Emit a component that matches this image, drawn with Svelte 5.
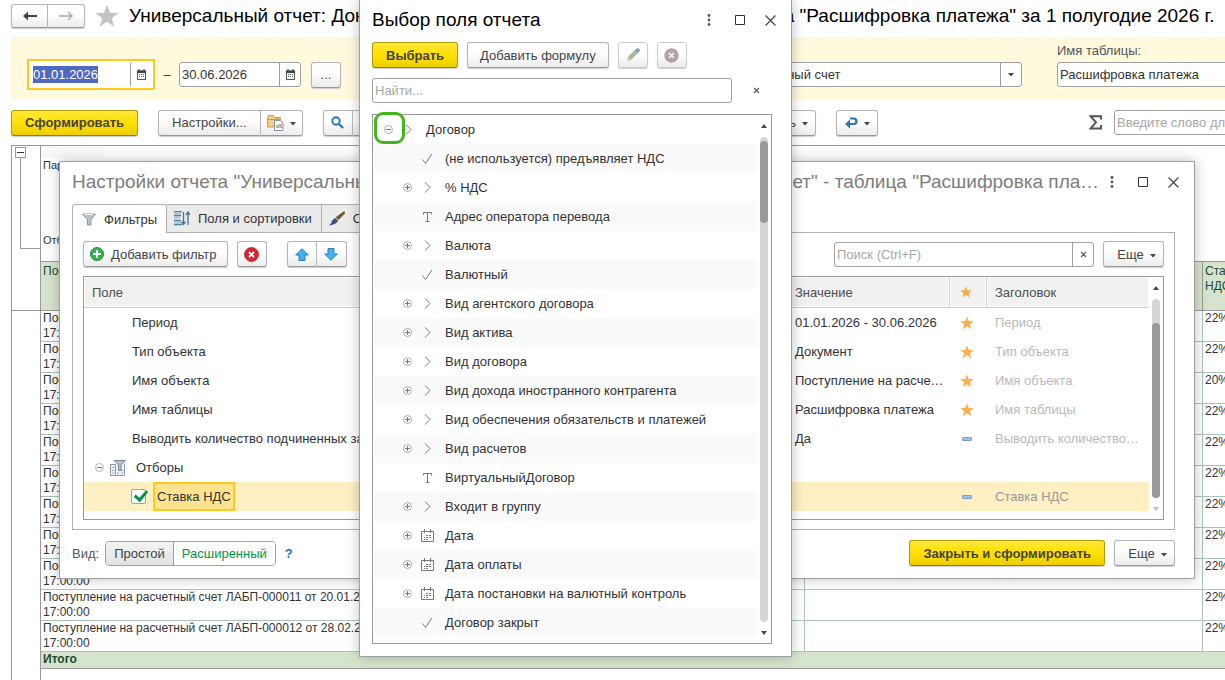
<script lang="ts">
  type Kind = 'ref' | 'bool' | 'text' | 'date';

  interface Field {
    name: string;
    kind: Kind;
  }

  interface Setting {
    name: string;
    value: string;
    starred: boolean;
  }

  const fields: Field[] = [
    { name: '(не используется) предъявляет НДС', kind: 'bool' },
    { name: '% НДС', kind: 'ref' },
    { name: 'Адрес оператора перевода', kind: 'text' },
    { name: 'Валюта', kind: 'ref' },
    { name: 'Валютный', kind: 'bool' },
    { name: 'Вид агентского договора', kind: 'ref' },
    { name: 'Вид актива', kind: 'ref' },
    { name: 'Вид договора', kind: 'ref' },
    { name: 'Вид дохода иностранного контрагента', kind: 'ref' },
    { name: 'Вид обеспечения обязательств и платежей', kind: 'ref' },
    { name: 'Вид расчетов', kind: 'ref' },
    { name: 'ВиртуальныйДоговор', kind: 'text' },
    { name: 'Входит в группу', kind: 'ref' },
    { name: 'Дата', kind: 'date' },
    { name: 'Дата оплаты', kind: 'date' },
    { name: 'Дата постановки на валютный контроль', kind: 'date' },
    { name: 'Договор закрыт', kind: 'bool' }
  ];

  const settings: Setting[] = [
    { name: 'Период', value: '01.01.2026 - 30.06.2026', starred: true },
    { name: 'Тип объекта', value: 'Документ', starred: true },
    { name: 'Имя объекта', value: 'Поступление на расчетный счет', starred: true },
    { name: 'Имя таблицы', value: 'Расшифровка платежа', starred: true },
    { name: 'Выводить количество подчиненных записей', value: 'Да', starred: false }
  ];

  const dates = ['12.01', '13.01', '14.01', '14.01', '15.01', '15.01', '16.01', '16.01', '19.01', '20.01', '28.02'];
  const rows = dates.map((d, i) => ({
    doc: `Поступление на расчетный счет ЛАБП-${String(i + 2).padStart(6, '0')} от ${d}.2026`,
    rate: i === 2 ? '20%' : '22%'
  }));

  let dateFrom = '01.01.2026';
  let dateTo = '30.06.2026';
  let expanded = true;
  let rateEnabled = true;
  let view = 'full';
</script>

<svelte:head>
  <title>Универсальный отчет</title>
</svelte:head>

{#snippet calendar()}
  <svg width="11" height="11" viewBox="0 0 11 11" aria-hidden="true">
    <path d="M1.5 2h8v8.500h-8z" fill="#fff" stroke="#555" />
    <path d="M1 1.500h9V4H1z" fill="#444" />
    <path d="M3 0v2M8 0v2" stroke="#444" />
    <path d="M3 5.500h1M5 5.500h1M7 5.500h1M3 7.500h1M5 7.500h1M7 7.500h1" stroke="#555" />
  </svg>
{/snippet}

{#snippet caret()}
  <svg class="caret" width="6" height="4" viewBox="0 0 6 4" aria-hidden="true"><path d="M0 0h6L3 3.500z" fill="#444" /></svg>
{/snippet}

{#snippet star(size: number, color: string)}
  <svg width={size} height={size} viewBox="0 0 24 24" aria-hidden="true">
    <path d="M12 .5l3 8.200 8.700.2-6.900 5.400 2.500 8.500L12 17.700l-7.300 5.100 2.500-8.500L.3 8.900 9 8.700z" fill={color} />
  </svg>
{/snippet}

{#snippet cross(size: number)}
  <svg width={size} height={size} viewBox="0 0 10 10" aria-hidden="true"><path d="M.5.5l9 9M9.500.5l-9 9" stroke="#444" stroke-width="1.100" fill="none" /></svg>
{/snippet}

{#snippet clearMark()}
  <svg width="7" height="7" viewBox="0 0 7 7" aria-hidden="true"><path d="M1 1l5 5M6 1L1 6" stroke="#555" stroke-width="1.100" /></svg>
{/snippet}

{#snippet winControls()}
  <div class="controls">
    <button type="button" aria-label="Меню">
      <svg width="4" height="12" viewBox="0 0 4 12"><circle cx="2" cy="1.500" r="1.400" fill="#555" /><circle cx="2" cy="6" r="1.400" fill="#555" /><circle cx="2" cy="10.500" r="1.400" fill="#555" /></svg>
    </button>
    <button type="button" aria-label="Развернуть">
      <svg width="11" height="10" viewBox="0 0 11 10"><path d="M1.500.5h9v9h-9z" fill="none" stroke="#333" /></svg>
    </button>
    <button type="button" aria-label="Закрыть">{@render cross(11)}</button>
  </div>
{/snippet}

{#snippet expander(open: boolean)}
  <svg width="9" height="9" viewBox="0 0 9 9" aria-hidden="true">
    <circle cx="4.500" cy="4.500" r="4" fill="#fff" stroke="#999" stroke-width=".8" />
    <path d={open ? 'M2 4.500h5' : 'M2 4.500h5M4.500 2v5'} stroke="#777" />
  </svg>
{/snippet}

{#snippet kindIcon(kind: Kind)}
  <svg width="13" height="13" viewBox="0 0 13 13" fill="none" stroke="#777" aria-hidden="true">
    {#if kind === 'ref'}
      <path d="M4 1.500l5 5-5 5" />
    {:else if kind === 'bool'}
      <path d="M1.500 7.500l3 4L11 2" />
    {:else if kind === 'text'}
      <path d="M2.500 4.500v-2h8v2M6.500 2.500v9M4.500 11.500h4" />
    {:else}
      <path d="M.5 2.500h12v10H.5zM3.500 0v4M9.500 0v4" />
      <path d="M5 6.500h2M8 6.500h2M3 8.500h1M5 8.500h2M8 8.500h2M3 10.500h1M5 10.500h2" stroke-width="1.200" />
    {/if}
  </svg>
{/snippet}

<div class="page">
  <header class="top">
    <div class="group">
      <button type="button" class="btn nav" aria-label="Назад">
        <svg width="14" height="10" viewBox="0 0 14 10"><path d="M14 4v2H5v3.500L0 5 5 .5V4z" fill="#444" /></svg>
      </button>
      <button type="button" class="btn nav" aria-label="Вперед">
        <svg width="14" height="10" viewBox="0 0 14 10"><path d="M0 5h13M9 1l4 4-4 4" fill="none" stroke="#aaa" stroke-width="1.500" /></svg>
      </button>
    </div>
    {@render star(24, '#c4c4c4')}
    <h1>Универсальный отчет: Документ Поступление на расчетный счет - таблица "Расшифровка платежа" за 1 полугодие 2026 г.</h1>
  </header>

  <section class="filters">
    <div class="period">
      <div class="focus">
        <div class="box date">
          <input type="text" aria-label="Начало периода" value={dateFrom} class="selected" style="width: {dateFrom.length * 7 - 5}px" />
          <button type="button" aria-label="Выбрать дату начала">{@render calendar()}</button>
        </div>
      </div>
      <span class="dash">–</span>
      <div class="box date">
        <input type="text" aria-label="Конец периода" bind:value={dateTo} />
        <button type="button" aria-label="Выбрать дату окончания">{@render calendar()}</button>
      </div>
      <button type="button" class="btn dots">...</button>
    </div>
    <div class="field kind">
      <label for="kind">Тип объекта:</label>
      <div class="box"><input id="kind" type="text" value="Документ" /><button type="button" aria-label="Открыть список">{@render caret()}</button></div>
    </div>
    <div class="field object">
      <label for="object">Имя объекта:</label>
      <div class="box"><input id="object" type="text" value="Поступление на расчетный счет" /><button type="button" aria-label="Открыть список">{@render caret()}</button></div>
    </div>
    <div class="field table-name">
      <label for="table-name">Имя таблицы:</label>
      <div class="box"><input id="table-name" type="text" value="Расшифровка платежа" /><button type="button" aria-label="Открыть список">{@render caret()}</button></div>
    </div>
  </section>

  <div class="commands">
    <button type="button" class="btn primary">Сформировать</button>
    <div class="group">
      <button type="button" class="btn options">Настройки...</button>
      <button type="button" class="btn pick" aria-label="Варианты отчета">
        <svg width="17" height="17" viewBox="0 0 17 17">
          <path d="M.5 3.500V13h8V5h5V3.500H7.500l-1-2h-5z" fill="#f2cf85" stroke="#c99a45" />
          <path d="M.5 5.500h13v3" fill="none" stroke="#c99a45" />
          <path d="M7.500 6.500h6l2.500 2.500v7.500H7.500z" fill="#fff" stroke="#7f93a8" />
          <path d="M10 14v-3M14 14v-4" stroke="#d33" /><path d="M12 14v-4" stroke="#38a040" />
        </svg>
        {@render caret()}
      </button>
    </div>
    <div class="group">
      <button type="button" class="btn icon" aria-label="Найти">
        <svg width="13" height="13" viewBox="0 0 13 13"><circle cx="5" cy="5" r="3.700" fill="none" stroke="#2a75ad" stroke-width="1.900" /><path d="M8 8l4 4" stroke="#2a75ad" stroke-width="2.400" /></svg>
      </button>
      <button type="button" class="btn icon" aria-label="Отменить поиск">{@render cross(9)}</button>
    </div>
    <div class="group print">
      <button type="button" class="btn">Печать {@render caret()}</button>
    </div>
    <button type="button" class="btn back" aria-label="Отправить">
      <svg width="13" height="12" viewBox="0 0 13 12"><path d="M5 1.500h3.500q3 0 3 2.700t-3 2.800H4" fill="none" stroke="#2a75ad" stroke-width="2.200" /><path d="M0 7l5-4.500v9z" fill="#2a75ad" /></svg>
      {@render caret()}
    </button>
    <svg class="sigma" width="13" height="15" viewBox="0 0 13 15" aria-label="Сумма"><path d="M12 4.500V1.200H1.500L7 7.300 1.500 13.600H12V10" fill="none" stroke="#555" stroke-width="2" /></svg>
    <input class="box word" type="text" aria-label="Поиск по отчету" placeholder="Введите слово для фильтра" />
  </div>

  <main class="report">
    <div class="gutter">
      <div class="outline">
        <button type="button" aria-label="Свернуть группу"></button>
        <span></span>
      </div>
    </div>
    <div class="sheet">
      <div class="params">
        <p>Параметры:</p>
        <p>Отбор:</p>
      </div>
      <table>
        <thead>
          <tr><th class="doc">Поступление на расчетный счет</th><th class="wide"></th><th>Ставка<br />НДС</th></tr>
        </thead>
        <tbody>
          {#each rows as row}
            <tr><td>{row.doc}<br />17:00:00</td><td></td><td>{row.rate}</td></tr>
          {/each}
        </tbody>
        <tfoot>
          <tr><td colspan="3">Итого</td></tr>
        </tfoot>
      </table>
    </div>
  </main>

  <section class="window settings" aria-label="Настройки отчета">
    <div class="title">
      <h2>Настройки отчета "Универсальный отчет Документ Поступление на расчетный счет" - таблица "Расшифровка платежа"</h2>
      {@render winControls()}
    </div>

    <div class="tabs">
      <button type="button" class="tab active">
        <svg width="14" height="13" viewBox="0 0 14 13"><path d="M.5 1h13L9 6.500V12H5.500V6.500z" fill="#b9c0ca" stroke="#8c96a3" /><path d="M2.500 1.500h9" stroke="#eef1f5" /></svg>
        Фильтры
      </button>
      <button type="button" class="tab">
        <svg width="16" height="15" viewBox="0 0 16 15">
          <path d="M0 .5h8M0 4.500h7M0 9.500h7M0 13.500h8" stroke="#4f7f9e" stroke-width="1.400" />
          <path d="M0 2.500h7M0 6.500h6M0 11.500h7" stroke="#a9c4d4" stroke-width="2" />
          <path d="M9.500 1v12M7.500 10.500l2 3 2-3M14 14V1M12 4l2-3 2 3" stroke="#3f6f9c" stroke-width="1.300" fill="none" />
        </svg>
        Поля и сортировки
      </button>
      <button type="button" class="tab">
        <svg width="16" height="15" viewBox="0 0 16 15"><path d="M15.500 0L16 2.500 9.500 9 6.500 6.500 13 1.500z" fill="#7b5528" /><path d="M6 7l3 2.500q-1 4-9 5 3-2.500 3-5z" fill="#454a86" /></svg>
        Оформление
      </button>
    </div>

    <div class="panel">
      <div class="bar">
        <button type="button" class="btn add">
          <svg width="14" height="14" viewBox="0 0 14 14"><circle cx="7" cy="7" r="6.500" fill="#35b04c" stroke="#258a39" /><path d="M7 3v8M3 7h8" stroke="#fff" stroke-width="2" /></svg>
          Добавить фильтр
        </button>
        <button type="button" class="btn icon" aria-label="Удалить">
          <svg width="15" height="15" viewBox="0 0 15 15"><circle cx="7.500" cy="7.500" r="7" fill="#dc2430" stroke="#b3202a" stroke-width=".8" /><path d="M5 5l5 5M10 5l-5 5" stroke="#fff" stroke-width="1.800" /></svg>
        </button>
        <div class="group arrows">
          <button type="button" class="btn icon" aria-label="Вверх">
            <svg width="14" height="13" viewBox="0 0 14 13"><path d="M7 .7L13.300 7H10v5.500H4V7H.7z" fill="#43b0f1" stroke="#2b7fb6" /></svg>
          </button>
          <button type="button" class="btn icon" aria-label="Вниз">
            <svg width="14" height="13" viewBox="0 0 14 13"><path d="M7 12.300L13.300 6H10V.5H4V6H.7z" fill="#43b0f1" stroke="#2b7fb6" /></svg>
          </button>
        </div>
        <div class="box find">
          <input type="text" aria-label="Поиск" placeholder="Поиск (Ctrl+F)" />
          <button type="button" aria-label="Очистить">{@render clearMark()}</button>
        </div>
        <button type="button" class="btn more">Еще {@render caret()}</button>
      </div>

      <div class="grid">
        <div class="rows">
          <table>
            <thead>
              <tr>
                <th>Поле</th>
                <th class="value">Значение</th>
                <th class="mark">{@render star(12, '#f7ab45')}</th>
                <th class="caption">Заголовок</th>
              </tr>
            </thead>
            <tbody>
              {#each settings as s}
                <tr>
                  <td class="name">{s.name}</td>
                  <td>{s.value}</td>
                  <td class="mark">
                    {#if s.starred}{@render star(14, '#ffb04c')}{:else}<i class="minus"></i>{/if}
                  </td>
                  <td class="hint">{s.name}</td>
                </tr>
              {/each}
              <tr>
                <td class="folder">
                  <div class="cell">
                    {@render expander(true)}
                    <svg width="16" height="16" viewBox="0 0 16 16"><path d="M.5 4.500h5v11h-5zM5.500 7.500v8h9v-12" fill="#eef2f6" stroke="#8796a6" /><path d="M2 7.500h2M2 10.500h2M2 13h2M7 13h2M11 13h2M11 10.500h2" stroke="#9aa7b4" /><path d="M4 .5h11.500L11 5v5.500H8.500V5z" fill="#b5bfca" stroke="#7b8998" /></svg>
                    Отборы
                  </div>
                </td>
                <td></td><td></td><td></td>
              </tr>
              <tr class="current">
                <td class="rate">
                  <label class="cell">
                    <input type="checkbox" bind:checked={rateEnabled} />
                    <span>Ставка НДС</span>
                  </label>
                </td>
                <td></td>
                <td class="mark"><i class="minus"></i></td>
                <td class="hint">Ставка НДС</td>
              </tr>
            </tbody>
          </table>
        </div>
        <div class="scroll low">
          <i class="up"></i><div class="track"><div class="thumb"></div></div><i class="down"></i>
        </div>
      </div>
    </div>

    <div class="footer">
      <span>Вид:</span>
      <div class="group switch">
        <button type="button" class:on={view === 'simple'} on:click={() => (view = 'simple')}>Простой</button>
        <button type="button" class:on={view === 'full'} on:click={() => (view = 'full')}>Расширенный</button>
      </div>
      <a href="#help">?</a>
      <button type="button" class="btn primary">Закрыть и сформировать</button>
      <button type="button" class="btn more">Еще {@render caret()}</button>
    </div>
  </section>

  <section class="window picker" aria-label="Выбор поля отчета">
    <div class="title">
      <h2>Выбор поля отчета</h2>
      {@render winControls()}
    </div>
    <div class="bar">
      <button type="button" class="btn primary">Выбрать</button>
      <button type="button" class="btn">Добавить формулу</button>
      <button type="button" class="btn icon" disabled aria-label="Изменить">
        <svg width="14" height="14" viewBox="0 0 14 14"><path d="M1 13l1.500-5L9 2l3 3-6.500 6.500z" fill="#6f9260" /><path d="M8.500 2.500l2-2q2-.5 3 .5t0 2.500l-2 2z" fill="#44697f" /><path d="M1 13l1-3.500 2.500 2.500z" fill="#d9b68c" /></svg>
      </button>
      <button type="button" class="btn icon" disabled aria-label="Удалить">
        <svg width="15" height="15" viewBox="0 0 15 15"><circle cx="7.500" cy="7.500" r="7.200" fill="#8d6668" /><path d="M5 5l5 5M10 5l-5 5" stroke="#fff" stroke-width="1.500" /></svg>
      </button>
    </div>
    <div class="bar">
      <input class="box search" type="text" aria-label="Найти" placeholder="Найти..." />
      <button type="button" class="clear" aria-label="Очистить">{@render clearMark()}</button>
    </div>
    <div class="tree">
      <ul>
        <li class="root">
          <button type="button" class="toggle" aria-label="Свернуть" on:click={() => (expanded = !expanded)}>{@render expander(expanded)}</button>
          {@render kindIcon('ref')}
          <span>Договор</span>
        </li>
        {#if expanded}
          {#each fields as f}
            <li>
              {#if f.kind === 'ref' || f.kind === 'date'}
                <button type="button" class="toggle" aria-label="Развернуть">{@render expander(false)}</button>
              {:else}
                <i class="toggle"></i>
              {/if}
              {@render kindIcon(f.kind)}
              <span>{f.name}</span>
            </li>
          {/each}
        {/if}
      </ul>
      <div class="scroll">
        <i class="up"></i><div class="track"><div class="thumb"></div></div><i class="down"></i>
      </div>
      <div class="ring"></div>
    </div>
  </section>
</div>

<style>
  :global(body) {
    margin: 0;
    background: #fff;
  }

  * {
    box-sizing: border-box;
  }

  .page {
    position: relative;
    display: flex;
    flex-direction: column;
    height: 100vh;
    overflow: hidden;
    font: 13px/15px 'Liberation Sans', Arial, sans-serif;
    color: #333;
  }

  button,
  input {
    font: inherit;
    color: inherit;
  }

  button {
    padding: 0;
    border: 0;
    background: none;
    display: flex;
    align-items: center;
    justify-content: center;
    white-space: nowrap;
  }

  svg {
    display: block;
    flex: none;
  }

  h1,
  h2 {
    margin: 0;
    font-size: 19px;
    line-height: 24px;
    font-weight: 400;
    color: #000;
    white-space: nowrap;
  }

  /* Buttons and fields */
  .btn {
    height: 26px;
    padding: 0 12px;
    border: 1px solid #b5b5b5;
    border-bottom-color: #999;
    border-radius: 3px;
    background: linear-gradient(#fff 40%, #ececec);
    box-shadow: 0 1px 1px #ccc;
    color: #444;
  }

  .btn .caret {
    margin-left: 6px;
    margin-top: 3px;
  }

  .primary {
    padding: 0 13px;
    border-color: #b09a0c;
    border-bottom-color: #8f7e10;
    background: linear-gradient(#ffe838, #ffe000 50%, #ecce00);
    font-weight: 700;
  }

  .icon {
    width: 30px;
    padding: 0;
  }

  .btn:disabled {
    border-color: #ccc;
  }

  .btn:disabled > svg {
    opacity: 0.6;
  }

  .group {
    display: flex;
    flex: none;
  }

  .group .btn:not(:first-child) {
    border-left: 0;
    border-top-left-radius: 0;
    border-bottom-left-radius: 0;
  }

  .group .btn:not(:last-child) {
    border-top-right-radius: 0;
    border-bottom-right-radius: 0;
  }

  .box {
    display: flex;
    height: 25px;
    border: 1px solid #a0a0a0;
    border-radius: 3px;
    background: #fff;
  }

  .box input {
    flex: 1;
    min-width: 0;
    padding: 0 2px;
    border: 0;
    background: none;
    outline: none;
  }

  .box button {
    flex: none;
    width: 21px;
    border-left: 1px solid #a0a0a0;
  }

  input.box {
    padding: 0 2px;
    outline: none;
  }

  ::placeholder {
    color: #a6a6a6;
    opacity: 1;
  }

  /* Report page */
  .top {
    display: flex;
    flex: none;
    align-items: center;
    gap: 10px;
    height: 37px;
    padding: 0 0 6px 11px;
  }

  .nav {
    width: 37px;
    height: 24px;
    padding: 0;
  }

  .filters {
    display: flex;
    flex: none;
    align-items: flex-end;
    gap: 35px;
    height: 63px;
    margin-left: 11px;
    padding: 0 0 13px 16px;
    background: #fff9de;
  }

  .period {
    display: flex;
    align-items: center;
    height: 25px;
  }

  .focus {
    padding: 1px;
    border: 2px solid #ffc91e;
    background: #fff;
  }

  .focus .date {
    border-color: transparent;
  }

  .date {
    width: 122px;
  }

  .selected {
    align-self: center;
    color: #fff;
  }

  .box .selected {
    flex: none;
    height: 17px;
    margin-left: 2px;
    padding: 0;
    background: #5069c0;
  }

  .box .selected + button {
    margin-left: auto;
  }

  .dash {
    width: 24px;
    text-align: center;
  }

  .dots {
    width: 30px;
    margin-left: 10px;
    padding: 0;
  }

  .field label {
    display: block;
    margin-bottom: 4px;
    color: #555;
  }

  .kind {
    flex: 1;
    min-width: 0;
  }

  .object {
    flex: none;
    width: 379px;
  }

  .table-name {
    flex: none;
    width: 340px;
    margin-right: -172px;
  }

  .commands {
    display: flex;
    flex: none;
    align-items: center;
    gap: 20px;
    height: 45px;
    padding-left: 11px;
  }

  .options {
    padding: 0 13px;
  }

  .pick {
    width: 42px;
    padding: 0;
  }

  .back {
    width: 42px;
    flex: none;
    padding: 0;
  }

  .print {
    margin-left: auto;
  }

  .print .btn {
    padding-right: 7px;
  }

  .sigma {
    margin-left: 191px;
  }

  .word {
    flex: none;
    width: 240px;
    margin-left: -8px;
    margin-right: -129px;
  }

  .report {
    display: flex;
    flex: 1;
    min-height: 0;
    margin-left: 11px;
    border: 1px solid #999;
    border-width: 1px 0 0 1px;
    font-size: 12px;
  }

  .gutter {
    flex: none;
    width: 29px;
    border-right: 1px solid #999;
  }

  .outline {
    display: flex;
    flex-direction: column;
    height: 165px;
    padding: 1px 0 0 3px;
    border-bottom: 1px solid #999;
  }

  .outline button {
    width: 11px;
    height: 11px;
    border: 1px solid #999;
  }

  .outline button::before {
    content: '';
    width: 7px;
    height: 1px;
    background: #333;
  }

  .outline span {
    height: 91px;
    margin-left: 5px;
    border: 1px solid #999;
    border-width: 0 0 1px 1px;
  }

  .sheet {
    flex: 1;
    min-width: 0;
  }

  .params {
    height: 115px;
    padding: 12px 2px 0;
    font-size: 11px;
    background: linear-gradient(#f8f8f8, #f8f8f8) 0 0 / 63px 12px no-repeat;
  }

  .params p {
    margin: 0 0 60px;
  }

  .sheet table {
    width: calc(100% + 40px);
    table-layout: fixed;
    border-collapse: collapse;
  }

  .sheet th,
  .sheet td {
    height: 31px;
    padding: 0 2px;
    border: 1px solid #a9c5b9;
    border-left: 0;
    text-align: left;
    vertical-align: top;
    white-space: nowrap;
  }

  .sheet th {
    width: 62px;
    height: 49px;
    padding-top: 2px;
    border-color: #999;
    background: #d7e4cd;
    color: #1a4a35;
    font-weight: 400;
    overflow: hidden;
  }

  .sheet .doc {
    width: auto;
  }

  .sheet .wide {
    width: 398px;
  }

  .sheet tfoot td {
    height: 17px;
    border-color: #999;
    background: #d7e4cd;
    color: #1a4a35;
    font-weight: 700;
  }

  /* Windows */
  .window {
    position: absolute;
    padding: 0 19px 12px 12px;
    border: 1px solid #a0a0a0;
    background: #fff;
    box-shadow: 0 0 12px rgba(0, 0, 0, 0.25);
  }

  .title {
    display: flex;
    align-items: center;
    height: 40px;
    margin: 0 -14px 2px 0;
  }

  .title h2 {
    flex: 1;
    min-width: 0;
    overflow: hidden;
    text-overflow: ellipsis;
  }

  .controls {
    display: flex;
  }

  .controls button {
    width: 31px;
    height: 30px;
  }

  .bar {
    display: flex;
    align-items: center;
    gap: 9px;
  }

  .settings {
    top: 161px;
    left: 59px;
    right: 30px;
  }

  .settings h2 {
    margin-right: -6px;
    color: #7d7d7d;
  }

  .tabs {
    display: flex;
    margin-top: 1px;
  }

  .tab {
    gap: 8px;
    height: 28px;
    padding: 0 9px 0 7px;
    border: 1px solid #b0b0b0;
    border-left: 0;
    border-bottom: 0;
    background: #ebebeb;
  }

  .tab.active {
    position: relative;
    height: 29px;
    margin-bottom: -1px;
    padding-left: 9px;
    border-left: 1px solid #b0b0b0;
    border-radius: 3px 3px 0 0;
    background: #fff;
  }

  .panel {
    padding: 8px 10px 9px;
    border: 1px solid #b0b0b0;
  }

  .add {
    gap: 7px;
    padding: 0 10px 0 6px;
  }

  .arrows {
    margin-left: 11px;
  }

  .find {
    width: 260px;
    margin-left: auto;
  }

  .more {
    width: 61px;
    padding: 0 0 0 6px;
  }

  .grid {
    display: flex;
    margin-top: 9px;
    padding-bottom: 8px;
    border: 1px solid #999;
  }

  .rows {
    flex: 1;
    min-width: 0;
  }

  .grid table {
    width: 100%;
    table-layout: fixed;
    border-collapse: separate;
    border-spacing: 0;
  }

  .grid th,
  .grid td {
    height: 29px;
    padding: 0 5px;
    text-align: left;
    overflow: hidden;
    text-overflow: ellipsis;
    white-space: nowrap;
  }

  .grid th {
    height: 31px;
    padding: 0 8px;
    border-bottom: 1px solid #ccc;
    border-right: 1px solid #ccc;
    background: #f1f1f1;
    box-shadow: inset 0 0 0 1px #fff;
    color: #4d4d4d;
    font-weight: 400;
  }

  .grid .value {
    width: 160px;
    padding-left: 5px;
  }

  .grid .mark {
    width: 37px;
    padding: 0 4px 0 0;
  }

  .grid .mark :global(svg),
  .minus {
    display: block;
    margin: 0 auto;
  }

  .grid .caption {
    width: 162px;
    border-right: 0;
  }

  .minus {
    width: 10px;
    height: 4px;
    border: 1px solid #7ba0c4;
    border-radius: 1px;
    background: #9cc3ea;
  }

  .grid .name {
    padding-left: 48px;
  }

  .grid .hint {
    padding: 0 8px;
    color: #b9b9b9;
  }

  .cell {
    display: flex;
    align-items: center;
  }

  .grid .folder {
    padding-left: 11px;
  }

  .folder .cell > :global(svg:first-child) {
    margin-right: 6px;
  }

  .folder .cell > svg {
    margin-right: 10px;
  }

  .current td {
    background: #fef0c3;
  }

  .grid .current .hint {
    color: #999;
  }

  .grid .rate {
    padding: 0 0 0 47px;
  }

  .rate span {
    height: 29px;
    margin-left: 7px;
    padding: 0 2px;
    border: 2px solid #ffc91e;
    background: #ffe38f;
    line-height: 25px;
  }

  .rate input {
    appearance: none;
    position: relative;
    width: 15px;
    height: 15px;
    margin: 0;
    border: 1px solid #a0a0a0;
    border-radius: 2px;
    background: #fff;
  }

  .rate input:checked::after {
    content: '';
    position: absolute;
    left: 5px;
    top: -2px;
    width: 5px;
    height: 10px;
    border: solid #009646;
    border-width: 0 3px 3px 0;
    transform: rotate(40deg);
  }

  .footer {
    display: flex;
    align-items: center;
    gap: 9px;
    margin-top: 10px;
    color: #555;
  }

  .switch {
    margin-left: -3px;
    border: 1px solid #a0a0a0;
    border-radius: 4px;
    overflow: hidden;
  }

  .switch button {
    height: 23px;
    padding: 0 8px;
    background: linear-gradient(#f3f3f3, #e3e3e3);
    color: #444;
  }

  .switch button + button {
    border-left: 1px solid #a0a0a0;
  }

  .switch .on {
    background: #fff;
    color: #009646;
  }

  .footer a {
    color: #1a73b5;
    font-weight: 700;
    text-decoration: none;
  }

  .footer .primary {
    margin-left: auto;
  }

  /* Field picker */
  .picker {
    top: -1px;
    left: 359px;
    width: 433px;
  }

  .search {
    flex: 1;
    min-width: 0;
    margin-top: 10px;
  }

  .clear {
    width: 31px;
    height: 25px;
    margin-top: 10px;
  }

  .tree {
    position: relative;
    display: flex;
    margin-top: 11px;
    padding-bottom: 6px;
    border: 1px solid #999;
  }

  .tree ul {
    flex: 1;
    min-width: 0;
    margin: 0;
    padding: 0;
    list-style: none;
  }

  .tree li {
    display: flex;
    align-items: center;
    height: 29px;
    padding-left: 30px;
  }

  .tree li:nth-child(even) {
    background: #fafafa;
  }

  .tree li span {
    margin-left: 11px;
  }

  .tree .root {
    padding-left: 11px;
  }

  .toggle {
    width: 9px;
    margin-right: 9px;
  }

  .ring {
    position: absolute;
    top: -3px;
    left: 1px;
    width: 31px;
    height: 32px;
    border: 3px solid #45b51c;
    border-radius: 9px;
    pointer-events: none;
  }

  .scroll {
    display: flex;
    flex: none;
    flex-direction: column;
    align-items: center;
    gap: 9px;
    width: 14px;
    padding: 9px 0 2px;
  }

  .up,
  .down {
    border: 3px solid transparent;
    border-bottom: 4px solid #444;
    border-top: 0;
  }

  .down {
    border-top: 4px solid #444;
    border-bottom: 0;
  }

  .track {
    flex: 1;
    width: 8px;
    padding-top: 4px;
    border-radius: 4px;
    background: #d6d6d6;
  }

  .thumb {
    height: 17%;
    border-radius: 4px;
    background: #999;
  }

  .low {
    padding-bottom: 0;
  }

  .low .track {
    padding-top: 24px;
  }

  .low .thumb {
    height: 100%;
  }

  .low .down {
    border-top-color: #bbb;
  }
</style>
